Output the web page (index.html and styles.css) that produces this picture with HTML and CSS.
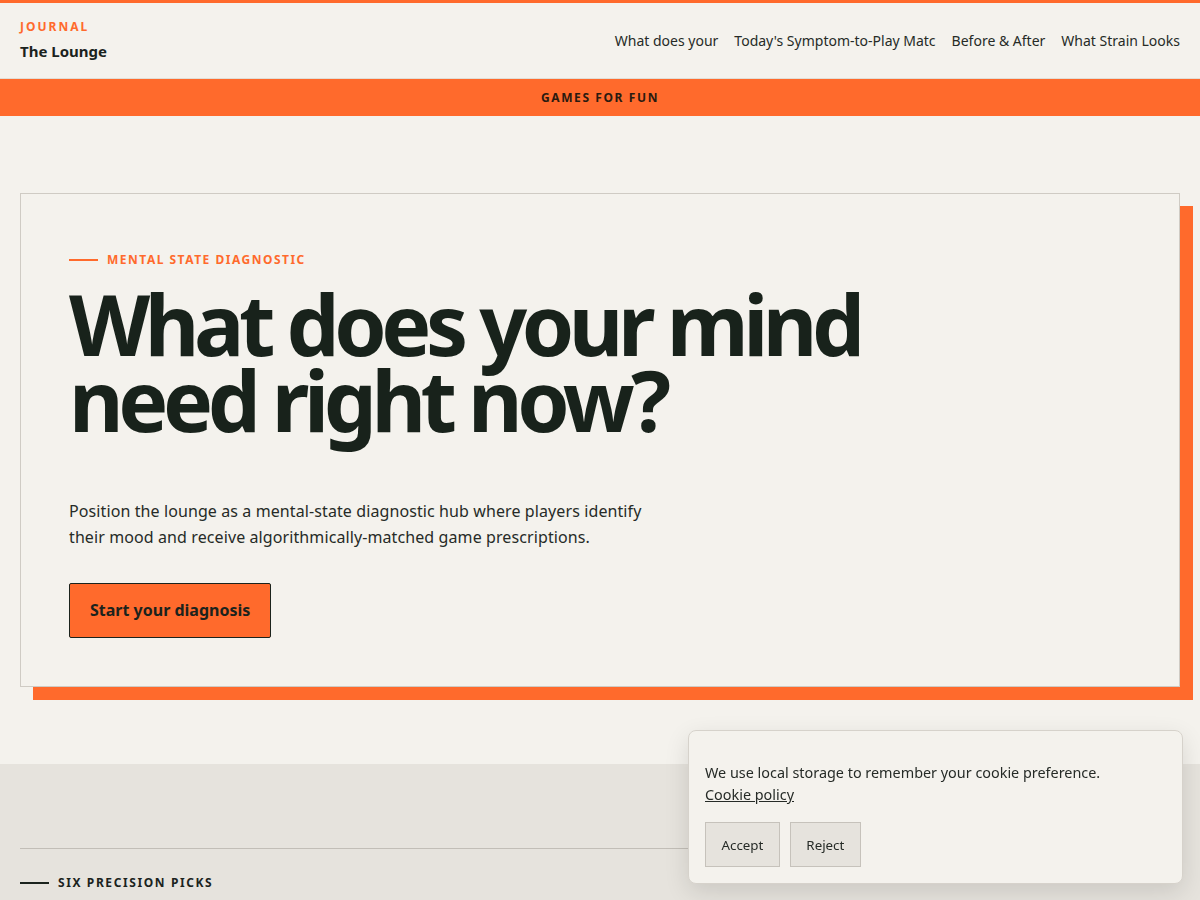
FILE: index.html
```html
<!DOCTYPE html>
<html lang="en">
<head>
<meta charset="utf-8">
<title>The Lounge</title>
<link rel="stylesheet" href="styles.css">
</head>
<body>
<header class="site-header">
  <div class="brand">
    <div class="brand-kicker">JOURNAL</div>
    <div class="brand-name">The Lounge</div>
  </div>
  <nav class="nav">
    <a href="#">What does your</a>
    <a href="#">Today's Symptom-to-Play Matc</a>
    <a href="#">Before &amp; After</a>
    <a href="#">What Strain Looks</a>
  </nav>
</header>
<div class="band">GAMES FOR FUN</div>
<main>
  <section class="hero">
    <div class="hero-card">
      <div class="eyebrow"><span class="eyebrow-line"></span>MENTAL STATE DIAGNOSTIC</div>
      <h1 class="headline">What does your mind<br>need right now?</h1>
      <p class="lead">Position the lounge as a mental-state diagnostic hub where players identify their mood and receive algorithmically-matched game prescriptions.</p>
      <a class="cta" href="#">Start your diagnosis</a>
    </div>
  </section>
  <section class="picks">
    <hr class="rule">
    <div class="section-label"><span class="label-line"></span>SIX PRECISION PICKS</div>
  </section>
</main>
<div class="cookie">
  <p class="cookie-text">We use local storage to remember your cookie preference.<br><a href="#">Cookie policy</a></p>
  <div class="cookie-actions">
    <button class="cookie-btn">Accept</button>
    <button class="cookie-btn">Reject</button>
  </div>
</div>
</body>
</html>
```

FILE: styles.css
```css
* { box-sizing: border-box; }
html, body { margin: 0; padding: 0; }
body {
  font-family: "Noto Sans", "Open Sans", sans-serif;
  background: #f4f2ed;
  color: #1b231d;
  height: 900px;
  overflow: hidden;
}
a { color: inherit; text-decoration: none; }

.site-header {
  border-top: 3px solid #ff6a2c;
  border-bottom: 1px solid #e2ddd5;
  height: 79px;
  padding: 0 20px;
  display: flex;
  align-items: center;
  justify-content: space-between;
}
.brand { display: flex; flex-direction: column; gap: 6px; margin-top: -1px; }
.brand-kicker {
  color: #ff6a2c;
  font-size: 12px;
  font-weight: 700;
  letter-spacing: 2px;
  line-height: 16px;
}
.brand-name {
  font-size: 15px;
  font-weight: 700;
  line-height: 20px;
  color: #1b231d;
}
.nav { display: flex; gap: 16px; }
.nav a { font-size: 14px; color: #262b27; white-space: nowrap; }

.band {
  background: #ff6a2c;
  height: 37px;
  display: flex;
  align-items: center;
  justify-content: center;
  font-size: 12px;
  font-weight: 700;
  letter-spacing: 1.6px;
  color: #2a1a10;
}

.hero { padding: 77px 20px; }
.hero-card {
  border: 1px solid #cfcbc4;
  background: #f4f2ed;
  box-shadow: 13px 13px 0 #ff6a2c;
  padding: 58px 48px 48px;
}
.eyebrow {
  display: flex;
  align-items: center;
  gap: 9px;
  color: #ff6a2c;
  font-size: 12px;
  font-weight: 700;
  letter-spacing: 1.5px;
  line-height: 16px;
}
.eyebrow-line { width: 29px; height: 2px; background: #ff6a2c; }
.headline {
  margin: 18px 0 0;
  font-size: 84px;
  line-height: 76px;
  font-weight: 700;
  letter-spacing: -5.4px;
  color: #18221b;
}
.lead {
  margin: 60px 0 0;
  max-width: 600px;
  font-size: 16px;
  line-height: 26px;
  letter-spacing: 0.1px;
  color: #262b27;
}
.cta {
  display: inline-block;
  margin-top: 33px;
  background: #ff6a2c;
  border: 1px solid #1b231d;
  border-radius: 2px;
  padding: 0 20px;
  height: 55px;
  line-height: 53px;
  font-size: 16px;
  font-weight: 700;
  color: #1b231d;
}

.picks {
  background: #e6e3dd;
  padding: 84px 20px 0;
  height: 200px;
}
.rule { margin: 0; border: 0; border-top: 1px solid #c2beb7; }
.section-label {
  margin-top: 26px;
  display: flex;
  align-items: center;
  gap: 9px;
  font-size: 12px;
  font-weight: 700;
  letter-spacing: 1.6px;
  line-height: 16px;
  color: #1b231d;
}
.label-line { width: 29px; height: 2px; background: #1b231d; }

.cookie {
  position: fixed;
  right: 17px;
  bottom: 16px;
  width: 495px;
  background: #f4f2ed;
  border: 1px solid #d6d2cb;
  border-radius: 8px;
  box-shadow: 0 8px 24px rgba(0,0,0,0.12);
  padding: 31px 16px 16px;
}
.cookie-text {
  margin: 0;
  font-size: 14.4px;
  line-height: 22px;
  color: #262b27;
}
.cookie-text a { text-decoration: underline; }
.cookie-actions { display: flex; gap: 10px; margin-top: 16px; }
.cookie-btn {
  font-family: inherit;
  font-size: 13.333px;
  color: #262b27;
  background: #e6e3dd;
  border: 1px solid #c6c2bb;
  border-radius: 0;
  height: 45px;
  padding: 0 15.5px;
}
```
